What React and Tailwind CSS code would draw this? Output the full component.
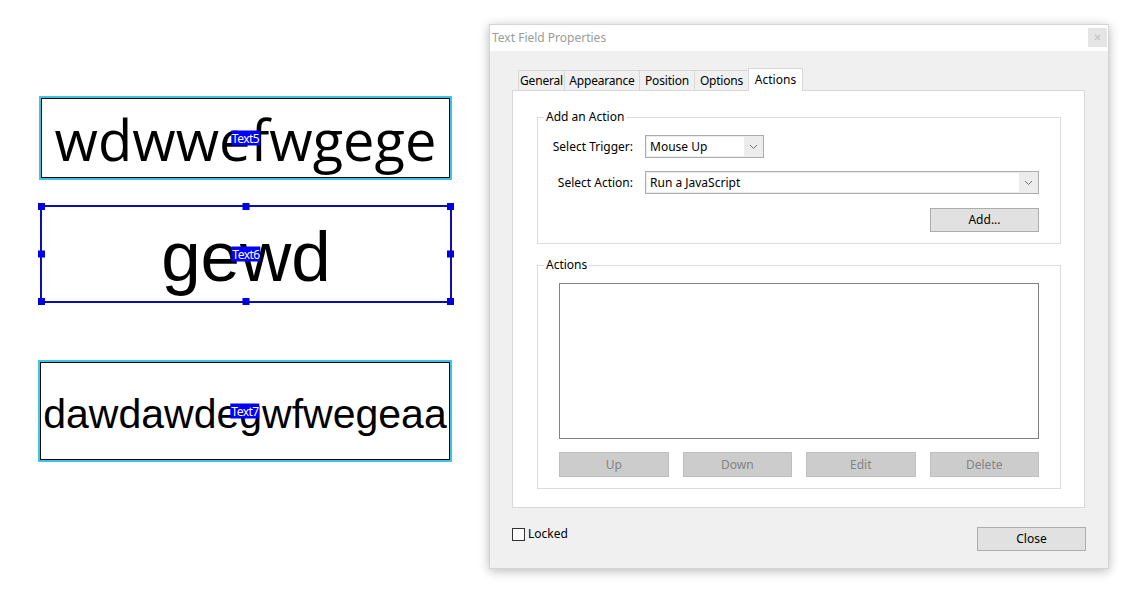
import React from 'react';

const ui = "font-['Segoe_UI','Noto_Sans',sans-serif] text-[12px]";

const Chevron = () => (
    <svg width="9" height="6" viewBox="0 0 9 6" fill="none">
        <path d="M1 1l3.5 3.5L8 1" stroke="#707070" strokeWidth="1" />
    </svg>
);

const Dropdown = ({ value, width }) => (
    <div className={`${width} h-[23px] border border-[#acacac] bg-[#ececec] flex`}>
        <div className="flex-1 h-[19px] mt-px ml-px bg-white flex items-center pl-[3px] text-black whitespace-nowrap">{value}</div>
        <div className="w-[19px] flex items-center justify-center">
            <Chevron />
        </div>
    </div>
);

const FieldTag = ({ label }) => (
    <span className="absolute left-1/2 top-1/2 -translate-x-1/2 -translate-y-1/2 bg-[#0000ff] text-white px-[1px] leading-[15px] text-[12px] font-['Segoe_UI','Noto_Sans',sans-serif] tracking-[-0.5px] z-10">
        {label}
    </span>
);

const Handle = ({ className }) => (
    <span className={`absolute w-[7px] h-[7px] bg-[#0000e0] ${className}`} />
);

const tabs = [
    { name: 'General', w: 'w-[46px]' },
    { name: 'Appearance', w: 'w-[75px]' },
    { name: 'Position', w: 'w-[55px]' },
    { name: 'Options', w: 'w-[54px]' },
];

export default function App() {
    return (
        <div className="w-[1130px] h-[606px] bg-white flex overflow-hidden">
            {/* form fields on the page */}
            <div className="w-[489px] shrink-0 pl-[38px] pt-[96px] flex flex-col">
                <div className="ml-[1px] w-[413px] h-[84px] border-2 border-[#38c5e6]">
                    <div className="relative h-full border border-black flex items-center justify-center overflow-hidden">
                        <span className="font-['Open_Sans',sans-serif] text-[56px] leading-none text-black pt-[1px]">wdwwefwgege</span>
                        <FieldTag label="Text5" />
                    </div>
                </div>

                <div className="relative mt-[25px] ml-[2px] w-[412px] h-[98px] border-2 border-[#0d0db4] flex items-center justify-center">
                    <span className="font-['Liberation_Sans',Arial,sans-serif] text-[71px] leading-none text-black pt-[4px]">gewd</span>
                    <FieldTag label="Text6" />
                    <Handle className="-left-[4px] -top-[4px]" />
                    <Handle className="left-1/2 -translate-x-1/2 -top-[4px]" />
                    <Handle className="-right-[4px] -top-[4px]" />
                    <Handle className="-left-[4px] top-1/2 -translate-y-1/2" />
                    <Handle className="-right-[4px] top-1/2 -translate-y-1/2" />
                    <Handle className="-left-[4px] -bottom-[4px]" />
                    <Handle className="left-1/2 -translate-x-1/2 -bottom-[4px]" />
                    <Handle className="-right-[4px] -bottom-[4px]" />
                </div>

                <div className="mt-[57px] w-[414px] h-[102px] border-2 border-[#38c5e6]">
                    <div className="relative h-full border border-black flex items-center justify-center overflow-hidden">
                        <span className="font-['Liberation_Sans',Arial,sans-serif] text-[41px] leading-none text-black pt-[6px]">dawdawdegwfwegeaa</span>
                        <FieldTag label="Text7" />
                    </div>
                </div>
            </div>

            {/* Text Field Properties dialog */}
            <div className={`mt-[24px] w-[620px] h-[545px] flex flex-col bg-[#f0f0f0] border border-[#d4d4d4] shadow-[0_2px_10px_rgba(0,0,0,0.28)] ${ui}`}>
                <div className="h-[26px] bg-white flex justify-between pl-[2px] pr-[1px]">
                    <span className="text-[#9b9b9b] leading-[26px]">Text Field Properties</span>
                    <div className="mt-[3px] w-[19px] h-[19px] bg-[#e5e5e5] flex items-center justify-center">
                        <svg width="7" height="7" viewBox="0 0 7 7">
                            <path d="M1 1l5 5M6 1l-5 5" stroke="#c4c4c4" strokeWidth="1.2" />
                        </svg>
                    </div>
                </div>

                <div className="flex-1 flex flex-col pl-[22px] pr-[24px] pt-[17px]">
                    <div className="ml-[6px] flex items-end h-[22px]">
                        {tabs.map((tab) => (
                            <div
                                key={tab.name}
                                className={`${tab.w} h-[20px] border-t border-l border-[#d9d9d9] bg-[#f0f0f0] flex items-center justify-center text-black whitespace-nowrap tracking-[-0.2px]`}
                            >
                                {tab.name}
                            </div>
                        ))}
                        <div className="relative z-10 w-[55px] h-[23px] -mb-px bg-white border-x border-t border-[#d9d9d9] flex items-start justify-center pt-[2px] text-black">
                            Actions
                        </div>
                    </div>

                    <div className="w-[573px] h-[418px] bg-white border border-[#d9d9d9] px-[24px] pt-[18px]">
                        <fieldset className="w-[524px] h-[135px] border border-[#dcdcdc]">
                            <legend className="ml-[6px] px-[2px] leading-[16px] text-black">Add an Action</legend>
                            <div className="pl-[6px] pr-[21px] pt-[10px]">
                                <div className="flex items-center">
                                    <span className="w-[89px] text-right mr-[12px] text-black whitespace-nowrap">Select Trigger:</span>
                                    <Dropdown value="Mouse Up" width="w-[119px]" />
                                </div>
                                <div className="flex items-center mt-[13px]">
                                    <span className="w-[89px] text-right mr-[12px] text-black whitespace-nowrap">Select Action:</span>
                                    <Dropdown value="Run a JavaScript" width="w-[394px]" />
                                </div>
                                <div className="flex justify-end mt-[14px]">
                                    <button className="w-[109px] h-[24px] bg-[#e1e1e1] border border-[#adadad] text-black">Add...</button>
                                </div>
                            </div>
                        </fieldset>

                        <fieldset className="mt-[13px] w-[524px] h-[232px] border border-[#dcdcdc]">
                            <legend className="ml-[6px] px-[2px] leading-[16px] text-black">Actions</legend>
                            <div className="pl-[21px] pt-[10px]">
                                <div className="w-[480px] h-[156px] border border-[#828282] bg-white" />
                                <div className="w-[480px] mt-[13px] grid grid-cols-4 gap-[14px]">
                                    {['Up', 'Down', 'Edit', 'Delete'].map((b) => (
                                        <button key={b} className="h-[25px] bg-[#cccccc] border border-[#bfbfbf] text-[#838383]">{b}</button>
                                    ))}
                                </div>
                            </div>
                        </fieldset>
                    </div>

                    <div className="flex items-start justify-between mt-[19px]">
                        <label className="flex items-center gap-[3px] text-black mt-[-1px] leading-[16px]">
                            <span className="w-[13px] h-[13px] border border-[#333333] bg-white" />
                            Locked
                        </label>
                        <button className="w-[109px] h-[24px] -mr-[2px] bg-[#e1e1e1] border border-[#adadad] text-black">Close</button>
                    </div>
                </div>
            </div>
        </div>
    );
}
